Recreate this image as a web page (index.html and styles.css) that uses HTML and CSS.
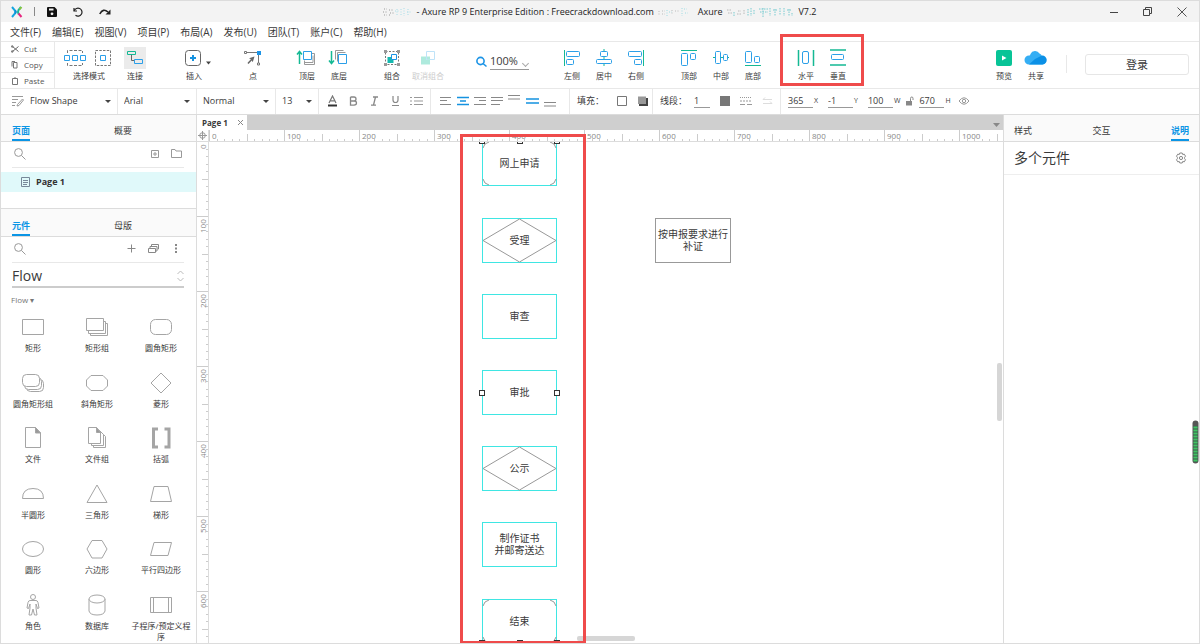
FILE: index.html
```html
<!DOCTYPE html>
<html lang="zh-CN">
<head>
<meta charset="utf-8">
<title>Axure RP 9</title>
<meta name="viewport" content="width=device-width, initial-scale=1">
<link rel="stylesheet" href="styles.css">
</head>
<body>
<div class="app">
  <header class="titlebar">
    <div class="quick">
      <svg class="logo" width="12" height="12" viewBox="0 0 12 12" fill="none" stroke-width="2"><path d="M1 1l3 3.500q1 1.500 0 3L1 11" stroke="#15a5e0"/><path d="M4 4.500q1.500 1.500 0 3" stroke="#0c8ed4"/><path d="M10 1L7.500 4q-1 2 0 4" stroke="#19b79c"/><path d="M10.500 1L8.500 3.500" stroke="#8bc540"/><path d="M7.500 7.500L10.500 11" stroke="#e6257e"/></svg>
      <span class="bar"></span>
      <button class="ico" aria-label="保存"><svg width="10" height="10" viewBox="0 0 10 10"><path d="M1 0h6.500L10 2.500V9q0 1-1 1H1Q0 10 0 9V1Q0 0 1 0z" fill="#111"/><path d="M2 1.500h4.500v2H2z" fill="#f3f3f3"/><circle cx="5" cy="6.800" r="1.400" fill="#f3f3f3"/></svg></button>
      <button class="ico" aria-label="撤销"><svg width="10" height="10" viewBox="0 0 10 10" fill="none" stroke="#222" stroke-width="1.200"><path d="M1 1v3h3"/><path d="M1.200 3.800A4 4 0 1 1 2.500 8.300"/></svg></button>
      <button class="ico" aria-label="重做"><svg width="12" height="10" viewBox="0 0 12 10"><path d="M.8 7Q4 .8 9 5" fill="none" stroke="#222" stroke-width="1.600"/><path d="M11.500 2.500V7.500H6.500z" fill="#222"/></svg></button>
    </div>
    <div class="title">
      <svg width="29" height="10" viewBox="0 0 29 10" fill="none" stroke-dasharray="1 1.500"><path d="M1 2h3M0 5h4M1 8h3M6 3h5M7 6h4M6 8h2" stroke="#999"/><path d="M12 4h4M14 2v7M18 2v7M21 1v8M24 5h4M25 2v6" stroke="#a8dde8"/></svg>
      <span>- Axure RP 9 Enterprise Edition : Freecrackdownload.com</span>
      <svg width="30" height="10" viewBox="0 0 30 10" fill="none" stroke-dasharray="1 1.500"><path d="M1 4v4M4 4h3M4 7h3M14 3v5M17 4h4" stroke="#bbb"/><path d="M9 3v6M11 5h3M24 1v8M26 2h3M27 6h3" stroke="#9edbe2"/></svg>
      <span class="product">Axure</span>
      <svg width="68" height="10" viewBox="0 0 68 10" fill="none" stroke-dasharray="1.500 1"><path d="M1 3h5M2 6h4M12 4h3M11 7h5M18 3v5" stroke="#b9b9b9"/><path d="M8 5v4M22 2v7M25 1v8M28 3v5M33 2h9M34 5h8M37 1v9M44 1v8M47 3h5M49 2v7M54 1v7M58 1v8M61 3h5M63 2v7M66 6v3" stroke="#79cbd0"/></svg>
      <span>V7.2</span>
    </div>
    <div class="winctl">
      <button class="ico" aria-label="最小化"><svg width="10" height="10" viewBox="0 0 10 10"><path d="M1 5.500h8" stroke="#444"/></svg></button>
      <button class="ico" aria-label="还原"><svg width="10" height="10" viewBox="0 0 10 10" fill="none" stroke="#444"><path d="M.5 2.500h6v6h-6zM2.500 2.500v-2h6v6h-2"/></svg></button>
      <button class="ico" aria-label="关闭"><svg width="10" height="10" viewBox="0 0 10 10"><path d="M.5.5l9 9M9.500.5l-9 9" stroke="#555"/></svg></button>
    </div>
  </header>

  <nav class="menu">
    <button>文件(F)</button><button>编辑(E)</button><button>视图(V)</button><button>项目(P)</button><button>布局(A)</button><button>发布(U)</button><button>团队(T)</button><button>账户(C)</button><button>帮助(H)</button>
  </nav>

  <section class="toolbar">
    <div class="clip">
      <button><svg width="8" height="8" viewBox="0 0 8 8" fill="none" stroke="#666"><path d="M1.500 1.500L7.500 6.500M1.500 6.500L7.500 1.500"/><circle cx="1.200" cy="1.500" r=".8"/><circle cx="1.200" cy="6.500" r=".8"/></svg>Cut</button>
      <button><svg width="8" height="8" viewBox="0 0 8 8" fill="none" stroke="#777"><path d="M2.500 1.500h3.500v5.500H2.500zM4 .5h-3v5"/></svg>Copy</button>
      <button><svg width="8" height="8" viewBox="0 0 8 8" fill="none" stroke="#777"><path d="M1.500 1.500h5v6h-5zM3 1h2"/></svg>Paste</button>
    </div>
    <div class="group">
      <button class="tool wide"><svg width="52" height="22" viewBox="0 0 52 22" fill="none"><path d="M4.500 6V3.500h15V6M4.500 16v2.500h15V16" stroke="#777" stroke-dasharray="3 1.500"/><path d="M1.500 8.500h5v5h-5zM9.500 8.500h5v5h-5zM17.500 8.500h5v5h-5z" stroke="#2b9fe8"/><path d="M32.500 3.500h15v15h-15z" stroke="#777" stroke-dasharray="2.500 1.250"/><path d="M37.500 8.500h5v5h-5z" stroke="#2b9fe8"/></svg>选择模式</button>
    </div>
    <div class="group g-connect">
      <button class="tool active"><svg width="22" height="22" viewBox="0 0 22 22" fill="none"><path d="M3.500 4.500h8v3h-8z" stroke="#15b994"/><path d="M7.500 8v5.500h3" stroke="#666"/><path d="M10.500 12.500h8v4h-8z" stroke="#2b9fe8"/></svg>连接</button>
    </div>
    <div class="group g-insert">
      <button class="tool insert"><svg width="36" height="22" viewBox="0 0 36 22" fill="none"><rect x="9.500" y="3.500" width="15" height="15" rx="3" stroke="#666"/><path d="M14 11h6M17 8v6" stroke="#1592e0" stroke-width="2"/><path d="M30 14.500h5l-2.500 3z" fill="#444"/></svg>插入</button>
    </div>
    <div class="group g-insert">
      <button class="tool"><svg width="22" height="22" viewBox="0 0 22 22" fill="none"><path d="M5 5.500h11.500V16" stroke="#777"/><path d="M2.500 4.500h2v2h-2zM15.500 16h2v2h-2z" fill="#fff" stroke="#777"/><path d="M15 4h4v4h-4z" fill="#1c94e6"/><path d="M6 16.500l4.500-5" stroke="#666" stroke-width="1.500"/><path d="M12.500 9.500L7 11.300l2.200.9.700 1.900.9.900z" fill="#666"/></svg>点</button>
    </div>
    <div class="group g-order">
      <button class="tool"><svg width="22" height="22" viewBox="0 0 22 22" fill="none"><path d="M3.500 17V5M1 7.500L3.500 4.500 6 7.500" stroke="#15b994" stroke-width="1.500"/><path d="M15.500 6.500h3v11h-10v-4M17 8.500v7h-8" stroke="#999"/><path d="M7.500 4.500h8v8h-8z" stroke="#2b9fe8" fill="#fff"/></svg>顶层</button>
      <button class="tool"><svg width="22" height="22" viewBox="0 0 22 22" fill="none"><path d="M3.500 4v12M1 13.500l2.500 3 2.500-3" stroke="#15b994" stroke-width="1.500"/><path d="M7.500 12.500v-9h8M9.500 14.500v-9h8" stroke="#999"/><path d="M10.500 7.500h8v9h-8z" stroke="#2b9fe8" fill="#fff"/></svg>底层</button>
    </div>
    <div class="group g-combine">
      <button class="tool"><svg width="22" height="22" viewBox="0 0 22 22" fill="none"><path d="M4.500 4.500h13v13h-13z" stroke="#777" stroke-dasharray="2 1.500"/><path d="M3 3h3v3H3zM16 3h3v3h-3zM3 16h3v3H3zM16 16h3v3h-3z" fill="#999"/><path d="M6.500 10h6v6h-6z" fill="#15b9b0"/><path d="M10.500 7.500h5v5h-5z" stroke="#1c94e6" fill="#fff"/></svg>组合</button>
      <button class="tool ungroup" disabled><svg width="22" height="22" viewBox="0 0 22 22" fill="none"><path d="M4 9.500h9v8H4z" fill="#aeeadd"/><path d="M9.500 4.500h8v8h-8z" stroke="#bfe3f8" fill="#fff"/><path d="M10 9.500h3v3h-3z" fill="#aeeadd"/></svg>取消组合</button>
    </div>
    <div class="zoom">
      <svg width="13" height="13" viewBox="0 0 13 13" fill="none" stroke="#1c94e6" stroke-width="1.600"><circle cx="5.500" cy="6" r="3.600"/><path d="M8 8.500l3.500 3"/></svg>
      <label class="pick"><select aria-label="缩放"><option>100%</option></select></label>
    </div>
    <div class="group g-align">
      <button class="tool"><svg width="22" height="22" viewBox="0 0 22 22" fill="none"><path d="M3.500 3v16" stroke="#15b994"/><rect x="5.500" y="4.500" width="13" height="5" rx="1" stroke="#2b9fe8"/><rect x="5.500" y="12.500" width="7" height="5" rx="1" stroke="#2b9fe8"/></svg>左侧</button>
      <button class="tool"><svg width="22" height="22" viewBox="0 0 22 22" fill="none"><path d="M11 2v17" stroke="#15b994"/><rect x="7.500" y="4.500" width="7" height="5" rx="1" stroke="#2b9fe8" fill="#fff"/><rect x="3.500" y="12.500" width="15" height="4" rx="1" stroke="#2b9fe8" fill="#fff"/></svg>居中</button>
      <button class="tool"><svg width="22" height="22" viewBox="0 0 22 22" fill="none"><path d="M18.500 3v16" stroke="#15b994"/><rect x="3.500" y="4.500" width="13" height="5" rx="1" stroke="#2b9fe8"/><rect x="9.500" y="12.500" width="7" height="5" rx="1" stroke="#2b9fe8"/></svg>右侧</button>
    </div>
    <div class="group g-valign">
      <button class="tool"><svg width="22" height="22" viewBox="0 0 22 22" fill="none"><path d="M3 3.500h16" stroke="#15b994"/><rect x="3.500" y="6.500" width="6" height="12" rx="1" stroke="#2b9fe8"/><rect x="12.500" y="6.500" width="5" height="6" rx="1" stroke="#2b9fe8"/></svg>顶部</button>
      <button class="tool"><svg width="22" height="22" viewBox="0 0 22 22" fill="none"><path d="M3 10.500h16" stroke="#15b994"/><rect x="5.500" y="4.500" width="5" height="12" rx="1" stroke="#2b9fe8" fill="#fff"/><rect x="13.500" y="7.500" width="4" height="6" rx="1" stroke="#2b9fe8" fill="#fff"/></svg>中部</button>
      <button class="tool"><svg width="22" height="22" viewBox="0 0 22 22" fill="none"><path d="M3 18.500h16" stroke="#15b994"/><rect x="3.500" y="4.500" width="6" height="11" rx="1" stroke="#2b9fe8"/><rect x="12.500" y="9.500" width="5" height="6" rx="1" stroke="#2b9fe8"/></svg>底部</button>
    </div>
    <div class="group g-spread">
      <button class="tool"><svg width="22" height="22" viewBox="0 0 22 22" fill="none"><path d="M3.500 3v16M18.500 3v16" stroke="#15b994" stroke-width="1.500"/><rect x="7.500" y="4.500" width="6" height="12" rx="1.500" stroke="#2b9fe8"/></svg>水平</button>
      <button class="tool"><svg width="22" height="22" viewBox="0 0 22 22" fill="none"><path d="M3 3h16M3 18h16" stroke="#15b994" stroke-width="1.500"/><rect x="4.500" y="7.500" width="12" height="5" rx="1" stroke="#2b9fe8"/></svg>垂直</button>
      <div class="mark mark-tools"></div>
    </div>
    <div class="account">
      <button class="tool"><svg width="22" height="22" viewBox="0 0 22 22"><rect x="3" y="3" width="16" height="16" rx="2" fill="#08c497"/><path d="M9 8.500v5l4.500-2.500z" fill="#fff"/></svg>预览</button>
      <button class="tool"><svg width="24" height="22" viewBox="0 0 24 22"><path d="M5 17.500a4.500 4.500 0 0 1 0-9Q6 9 6.500 7a5 5 0 0 1 9-.5 5 5 0 0 1 2.500 2.500 4.300 4.300 0 0 1 .5 8.500z" fill="#35aef4"/><path d="M5 17.500l6-5.500 7-3.500a4.500 4.500 0 0 1 .5 9z" fill="#0b90e6"/></svg>共享</button>
      <button class="login">登录</button>
    </div>
  </section>

  <section class="format">
    <div class="cell style">
      <svg width="12" height="12" viewBox="0 0 12 12" fill="none" stroke="#999"><path d="M0 1.500h11M0 4.500h6M0 7.500h4M0 10.500h3"/><path d="M5.500 9.500L10.500 4l1 1L7 10.500l-2 .5z"/></svg>
      <label class="pick"><select aria-label="样式"><option>Flow Shape</option></select></label>
    </div>
    <div class="cell font"><label class="pick"><select aria-label="字体"><option>Arial</option></select></label></div>
    <div class="cell weight"><label class="pick"><select aria-label="字重"><option>Normal</option></select></label></div>
    <div class="cell size"><label class="pick"><select aria-label="字号"><option>13</option></select></label></div>
    <div class="cell marks">
      <button class="ico" aria-label="文字颜色"><svg width="13" height="12" viewBox="0 0 13 12" fill="none"><path d="M3 8L6.500 1 10 8M4.300 5.800h4.400" stroke="#777" stroke-width="1.200"/><path d="M2 10.500h9" stroke="#333" stroke-width="2"/></svg></button>
      <button class="ico" aria-label="粗体"><svg width="13" height="12" viewBox="0 0 13 12" fill="none" stroke="#888" stroke-width="1.300"><path d="M3.500 2h3.500q2 0 2 2t-2 2H3.500M7 6q2.500 0 2.500 2T7 10.200H3.500V2"/></svg></button>
      <button class="ico" aria-label="斜体"><svg width="13" height="12" viewBox="0 0 13 12" fill="none" stroke="#888" stroke-width="1.300"><path d="M5 2h5M3 10.200h5M7.500 2l-2 8"/></svg></button>
      <button class="ico" aria-label="下划线"><svg width="13" height="12" viewBox="0 0 13 12" fill="none" stroke="#888" stroke-width="1.200"><path d="M4 1v4q0 2.500 2.500 2.500T9 5V1M3 10.500h7"/></svg></button>
      <button class="ico" aria-label="项目符号"><svg width="13" height="12" viewBox="0 0 13 12" stroke="#999" stroke-width="1.200"><path d="M0 2.500h2M4 2.500h9M0 6h2M4 6h9M0 9.500h2M4 9.500h9"/></svg></button>
    </div>
    <div class="cell aligns">
      <button class="ico" aria-label="左对齐"><svg width="12" height="12" viewBox="0 0 12 12" stroke="#888"><path d="M0 2.500h11M0 5.500h7M0 9.500h11"/></svg></button>
      <button class="ico" aria-label="居中对齐"><svg width="12" height="12" viewBox="0 0 12 12" stroke="#1592e0" stroke-width="1.500"><path d="M0 2.500h12M3 6h6M0 9.500h12"/></svg></button>
      <button class="ico" aria-label="右对齐"><svg width="12" height="12" viewBox="0 0 12 12" stroke="#888"><path d="M0 2.500h12M5 5.500h7M0 9.500h12"/></svg></button>
      <button class="ico" aria-label="两端对齐"><svg width="12" height="12" viewBox="0 0 12 12" stroke="#888"><path d="M0 2.500h12M0 5.500h12M0 9.500h9"/></svg></button>
      <button class="ico" aria-label="顶端对齐"><svg width="13" height="12" viewBox="0 0 13 12" stroke="#888"><path d="M0 .5h12M0 4h12"/></svg></button>
      <button class="ico" aria-label="垂直居中"><svg width="13" height="12" viewBox="0 0 13 12" stroke="#1592e0" stroke-width="1.500"><path d="M0 4h13M0 8h13"/></svg></button>
      <button class="ico" aria-label="底端对齐"><svg width="13" height="12" viewBox="0 0 13 12" stroke="#888"><path d="M0 7.500h12M0 11h12"/></svg></button>
    </div>
    <div class="cell fill"><span>填充：</span>
      <button class="ico" aria-label="填充颜色"><svg width="10" height="10" viewBox="0 0 10 10"><path d="M.5.5h9v9h-9z" fill="#fff" stroke="#777"/></svg></button>
      <button class="ico" aria-label="阴影"><svg width="11" height="10" viewBox="0 0 11 10"><path d="M2 2h9v8H2z" fill="#444"/><path d="M1 .5h8v7.500H1z" fill="#999"/></svg></button>
    </div>
    <div class="cell line"><label for="lw">线段：</label><input id="lw" class="num tiny" value="1">
      <button class="ico" aria-label="线条颜色"><svg width="10" height="10" viewBox="0 0 10 10"><path d="M0 0h10v10H0z" fill="#777"/></svg></button>
      <button class="ico" aria-label="线条样式"><svg width="12" height="10" viewBox="0 0 12 10" stroke="#999"><path d="M0 1.500h12" stroke-dasharray="1 1"/><path d="M0 5h12" stroke-dasharray="2 1"/><path d="M0 8.500h12" stroke-dasharray="5 2"/></svg></button>
      <button class="ico" aria-label="箭头样式"><svg width="11" height="10" viewBox="0 0 11 10" fill="none" stroke="#ddd"><path d="M1 3.500h9M3 1.500l-2 2M1 7.500h9M8 5.500l2 2"/></svg></button>
    </div>
    <div class="cell coords">
      <label><input class="num" value="365">X</label>
      <label><input class="num" value="-1">Y</label>
      <label><input class="num" value="100">W</label>
      <button class="ico lock" aria-label="锁定比例"><svg width="9" height="10" viewBox="0 0 9 10"><path d="M1 5h6v4.500H1z" fill="#888"/><path d="M5.500 5V2.500q0-1.500 1.300-1.500T8 2.500V4" fill="none" stroke="#888"/></svg></button>
      <label><input class="num" value="670">H</label>
      <button class="ico eye" aria-label="可见性"><svg width="12" height="10" viewBox="0 0 12 10" fill="none" stroke="#999"><path d="M1 5q5-6.500 10 0-5 6.500-10 0z"/><circle cx="6" cy="5" r="1.700"/></svg></button>
    </div>
  </section>

  <main class="main">
    <aside class="left">
      <div class="tabs"><button class="tab on">页面</button><button class="tab">概要</button></div>
      <div class="tools">
        <svg width="12" height="12" viewBox="0 0 12 12" fill="none" stroke="#999"><circle cx="4.500" cy="4.500" r="3.900"/><path d="M7.500 7.500l4 4"/></svg>
        <button class="ico push" aria-label="添加页面"><svg width="8" height="8" viewBox="0 0 8 8" fill="none" stroke="#999"><path d="M.5.5h7v7h-7z"/><path d="M4 2v4M2 4h4"/></svg></button>
        <button class="ico" aria-label="添加文件夹"><svg width="11" height="9" viewBox="0 0 11 9" fill="none" stroke="#999"><path d="M.5 8.500v-8H4l1 1.500h5.500v6.500z"/></svg></button>
      </div>
      <a class="page" href="#page1"><svg width="9" height="10" viewBox="0 0 9 10" fill="none" stroke="#789"><path d="M.5.5h8v9h-8zM2 3.500h5M2 5.500h5M2 7.500h4"/></svg>Page 1</a>
      <div class="tabs second"><button class="tab on">元件</button><button class="tab">母版</button></div>
      <div class="tools">
        <svg width="12" height="12" viewBox="0 0 12 12" fill="none" stroke="#999"><circle cx="4.500" cy="4.500" r="3.900"/><path d="M7.500 7.500l4 4"/></svg>
        <button class="ico push" aria-label="添加"><svg width="9" height="9" viewBox="0 0 9 9" stroke="#888"><path d="M4.500.5v8M.5 4.500h8"/></svg></button>
        <button class="ico" aria-label="元件库"><svg width="11" height="9" viewBox="0 0 11 9" fill="none" stroke="#888"><path d="M.5 4.500h7v4h-7zM2 4V2.500h7V7H8M3.500 2V.5h7V5H9.500"/></svg></button>
        <button class="ico menu-dots" aria-label="更多"><svg width="3" height="9" viewBox="0 0 3 9" fill="#888"><path d="M0 0h2v2H0zM0 3.500h2v2H0zM0 7h2v2H0z"/></svg></button>
      </div>
      <label class="library"><select aria-label="元件库选择"><option>Flow</option></select><svg width="7" height="12" viewBox="0 0 7 12" fill="none" stroke="#bbb"><path d="M.5 4l3-3 3 3M.5 8l3 3 3-3"/></svg></label>
      <div class="section">Flow ▾</div>
      <div class="shapes">
        <button><svg width="24" height="24" viewBox="0 0 24 24"><path d="M1.500 4.500h21v15h-21z"/></svg>矩形</button>
        <button><svg width="24" height="24" viewBox="0 0 24 24"><path d="M5.500 8.500h17v12h-17z"/><path d="M3.500 6.500h17v12h-17z"/><path d="M1.500 3.500h17v12h-17z"/></svg>矩形组</button>
        <button><svg width="24" height="24" viewBox="0 0 24 24"><rect x="1.500" y="4.500" width="21" height="15" rx="5"/></svg>圆角矩形</button>
        <button><svg width="24" height="24" viewBox="0 0 24 24"><rect x="5.500" y="8.500" width="17" height="12" rx="4"/><rect x="3.500" y="6.500" width="17" height="12" rx="4"/><rect x="1.500" y="3.500" width="17" height="12" rx="4"/></svg>圆角矩形组</button>
        <button><svg width="24" height="24" viewBox="0 0 24 24"><path d="M6 4.500h12l4.500 4.500v6L18 19.500H6L1.500 15V9z"/></svg>斜角矩形</button>
        <button><svg width="24" height="24" viewBox="0 0 24 24"><path d="M12 2l10 10-10 10L2 12z"/></svg>菱形</button>
        <button><svg width="24" height="24" viewBox="0 0 24 24"><path d="M4.500 1.500h10l5 5.500v14.500h-15z"/><path d="M14.500 1.500V7h5z" fill="#999"/></svg>文件</button>
        <button><svg width="24" height="24" viewBox="0 0 24 24"><path d="M8.500 6.500h8l4 4v11h-12z"/><path d="M6.500 4.500h8l4 4v11h-12z"/><path d="M3.500 1.500h8l4 5v11h-12z"/><path d="M11.500 1.500v5h4z" fill="#999"/></svg>文件组</button>
        <button><svg width="24" height="24" viewBox="0 0 24 24"><path class="thick" d="M9 3H4.500v18H9M15.500 3H20v18h-4.500"/></svg>括弧</button>
        <button><svg width="24" height="24" viewBox="0 0 24 24"><path d="M1.500 16.500q0-10 10.500-10t10.500 10z"/></svg>半圆形</button>
        <button><svg width="24" height="24" viewBox="0 0 24 24"><path d="M12 3l10 17.500H2z"/></svg>三角形</button>
        <button><svg width="24" height="24" viewBox="0 0 24 24"><path d="M5 4.500h14l3.500 15h-21z"/></svg>梯形</button>
        <button><svg width="24" height="24" viewBox="0 0 24 24"><ellipse cx="12" cy="12" rx="10.500" ry="7.500"/></svg>圆形</button>
        <button><svg width="24" height="24" viewBox="0 0 24 24"><path d="M7 3.500h10l5 8.500-5 9H7l-5-9z"/></svg>六边形</button>
        <button><svg width="24" height="24" viewBox="0 0 24 24"><path d="M5 5.500h17.500l-3.500 13H1.500z"/></svg>平行四边形</button>
        <button><svg width="24" height="24" viewBox="0 0 24 24"><circle cx="12" cy="4" r="2.500"/><path d="M9 7.500h6q1.500 0 2 2l1 5.500-1.500.5L15 11v4l1 7h-2.500L12 16l-1.500 6H8l1-7v-4l-1.500 4.500L6 15l1-5.500q.5-2 2-2z"/></svg>角色</button>
        <button><svg width="24" height="24" viewBox="0 0 24 24"><path d="M4 6v12q1 4 8 4t8-4V6"/><ellipse cx="12" cy="6" rx="8" ry="4"/></svg>数据库</button>
        <button><svg width="24" height="24" viewBox="0 0 24 24"><path d="M1.500 4.500h21v15h-21zM4.500 4.500v15M19.500 4.500v15"/></svg>子程序/预定义程序</button>
      </div>
    </aside>

    <section class="work">
      <div class="docs"><div class="doc"><span>Page 1</span><button class="ico" aria-label="关闭页面"><svg width="5" height="5" viewBox="0 0 5 5" stroke="#888"><path d="M0 0l5 5M5 0L0 5"/></svg></button></div><button class="ico docs-more" aria-label="页面列表"><svg width="7" height="4" viewBox="0 0 7 4"><path d="M0 0h7L3.500 4z" fill="#888"/></svg></button></div>
      <div class="board">
        <div class="corner"><svg width="9" height="9" viewBox="0 0 9 9" fill="none" stroke="#999"><circle cx="4.500" cy="4.500" r="2.800"/><path d="M4.500 0v9M0 4.500h9"/></svg></div>
        <svg class="ruler-x" aria-hidden="true">
          <defs><pattern id="tx" width="75" height="12" patternUnits="userSpaceOnUse"><path d="M.5 0v12M38.500 4v8M8.500 9v3M15.500 9v3M23.500 9v3M30.500 9v3M45.500 9v3M53.500 9v3M60.500 9v3M68.500 9v3" stroke="#ccc"/></pattern></defs>
          <rect width="100%" height="12" fill="url(#tx)"/>
          <g><text x="3" y="9">0</text><text x="78" y="9">100</text><text x="153" y="9">200</text><text x="228" y="9">300</text><text x="303" y="9">400</text><text x="378" y="9">500</text><text x="453" y="9">600</text><text x="528" y="9">700</text><text x="603" y="9">800</text><text x="678" y="9">900</text><text x="753" y="9">1000</text></g>
        </svg>
        <svg class="ruler-y" aria-hidden="true">
          <defs><pattern id="ty" y="-1" width="12" height="75" patternUnits="userSpaceOnUse"><path d="M0 .5h12M5 38.500h7M9 8.500h3M9 15.500h3M9 23.500h3M9 30.500h3M9 45.500h3M9 53.500h3M9 60.500h3M9 68.500h3" stroke="#ccc"/></pattern></defs>
          <rect width="12" height="100%" fill="url(#ty)"/>
          <g><text transform="translate(9 7) rotate(-90)">0</text><text transform="translate(9 91) rotate(-90)">100</text><text transform="translate(9 166) rotate(-90)">200</text><text transform="translate(9 241) rotate(-90)">300</text><text transform="translate(9 316) rotate(-90)">400</text><text transform="translate(9 391) rotate(-90)">500</text><text transform="translate(9 466) rotate(-90)">600</text></g>
        </svg>
        <div class="canvas">
          <div class="node sel n1"><svg width="75" height="45" viewBox="0 0 75 45"><path d="M1 38q1 5 6 6M74 38q-1 5-6 6M1 7q1-5 6-6M74 7q-1-5-6-6"/></svg><span>网上申请</span></div>
          <div class="node sel n2"><svg width="75" height="45" viewBox="0 0 75 45"><path d="M37.500 1L74 22.500 37.500 44 1 22.500z"/></svg><span>受理</span></div>
          <div class="node sel n3"><span>审查</span></div>
          <div class="node sel n4"><span>审批</span></div>
          <div class="node sel n5"><svg width="75" height="45" viewBox="0 0 75 45"><path d="M37.500 1L74 22.500 37.500 44 1 22.500z"/></svg><span>公示</span></div>
          <div class="node sel n6"><span>制作证书<br>并邮寄送达</span></div>
          <div class="node sel n7"><svg width="75" height="45" viewBox="0 0 75 45"><path d="M1 38q1 5 6 6M74 38q-1 5-6 6M1 7q1-5 6-6M74 7q-1-5-6-6"/></svg><span>结束</span></div>
          <div class="node n8"><span>按申报要求进行<br>补证</span></div>
          <i class="grip h1"></i><i class="grip h2"></i><i class="grip h3"></i><i class="grip h4"></i><i class="grip h5"></i><i class="grip h6"></i><i class="grip h7"></i><i class="grip h8"></i>
          <div class="thumb-y"></div><div class="thumb-x"></div>
        </div>
      </div>
      <div class="mark mark-flow"></div>
    </section>

    <aside class="right">
      <div class="tabs"><button class="tab">样式</button><button class="tab">交互</button><button class="tab on">说明</button></div>
      <div class="heading"><h2>多个元件</h2><button class="ico" aria-label="设置"><svg width="12" height="12" viewBox="0 0 12 12" fill="none" stroke="#888"><path d="M4.800 1h2.400l.5 1.500 1.600-.3L10.500 4.200 9.600 5.300v1.400l.9 1.100-1.200 2-1.600-.3L7.200 11H4.800l-.5-1.500-1.600.3-1.200-2 .9-1.100V5.300l-.9-1.100 1.200-2 1.600.3z"/><circle cx="6" cy="6" r="1.600"/></svg></button></div>
      <svg class="meter" width="7" height="44" viewBox="0 0 7 44"><rect x=".5" y=".5" width="6" height="43" rx="3" fill="#555"/><path d="M3.500 6v36" stroke="#3d8f57" stroke-width="4"/><path d="M3.500 7v35" stroke="#40c463" stroke-width="4" stroke-dasharray="1 2"/></svg>
    </aside>
  </main>
</div>
</body>
</html>
```
FILE: styles.css
```css
* { box-sizing: border-box; }
body { margin: 0; font: 9px/12px "Open Sans", "Noto Sans CJK SC", sans-serif; color: #3a3a3a; background: #fff; }
button, input, select { font: inherit; color: inherit; margin: 0; padding: 0; border: 0; background: none; border-radius: 0; }
svg { display: block; flex: none; }
select { appearance: none; outline: 0; }
h2 { margin: 0; font-weight: 400; font-size: 14px; line-height: 20px; }

.app { display: flex; flex-direction: column; height: 100vh; border: 1px solid #dcdcdc; overflow: hidden; }
.ico { display: flex; align-items: center; justify-content: center; flex: none; }

/* title bar */
.titlebar { display: grid; grid-template-columns: 1fr auto 1fr; align-items: center; height: 21px; flex: none; background: #f3f3f3; }
.quick { display: flex; align-items: center; gap: 16px; padding-left: 10px; }
.bar { width: 1px; height: 9px; background: #888; margin: 0 -4px 0 -5px; }
.title { display: flex; align-items: center; gap: 4px; color: #222; white-space: nowrap; }
.product { margin-left: 6px; }
.winctl { display: flex; justify-content: flex-end; gap: 24px; padding-right: 12px; }

.menu { display: flex; align-items: center; gap: 11px; height: 19px; padding-left: 9px; flex: none; font-size: 10px; }

/* main toolbar */
.toolbar { display: flex; height: 48px; flex: none; border-top: 1px solid #e8e8e8; border-bottom: 1px solid #e8e8e8; font-size: 8px; }
.clip { display: flex; flex-direction: column; width: 54px; margin-right: 8px; border-right: 1px solid #e8e8e8; }
.clip button { display: flex; align-items: center; gap: 5px; flex: 1; padding-left: 10px; color: #555; }
.clip button + button { border-top: 1px solid #e8e8e8; }
.group { position: relative; display: flex; padding-top: 5px; }
.tool { display: flex; flex-direction: column; align-items: center; gap: 1px; width: 32px; white-space: nowrap; }
.tool.wide { width: 52px; }
.tool.insert { width: 36px; }
.tool.ungroup { width: 40px; color: #ccc; }
.tool.active svg { background: #ebebeb; }
.g-connect { margin-left: 4px; }
.g-insert { margin-left: 25px; }
.g-order { margin-left: 22px; }
.g-combine { margin-left: 21px; }
.zoom { display: flex; align-items: flex-start; gap: 2px; margin-left: 27px; padding-top: 11px; }
.zoom svg { margin-top: 2px; }
.zoom .pick { width: 39px; border-bottom: 1px solid #999; font-size: 11px; line-height: 16px; }
.zoom .pick::after { border: solid #aaa; border-width: 0 1px 1px 0; width: 4px; height: 4px; transform: rotate(45deg); right: 1px; top: 8px; }
.g-align { margin-left: 27px; }
.g-valign { margin-left: 21px; }
.g-spread { margin-left: 21px; }
.account { display: flex; align-items: flex-start; margin-left: auto; padding: 5px 10px 0 0; }
.login { width: 104px; height: 21px; margin: 7px 0 0 33px; border: 1px solid #e6e6e6; border-radius: 3px; font-size: 11px; position: relative; }
.login::before { content: ""; position: absolute; left: -20px; top: 0; width: 1px; height: 18px; background: #e8e8e8; }

.pick { position: relative; display: flex; flex: 1; }
.pick select { width: 100%; }
.pick::after { content: ""; position: absolute; right: 0; top: 5px; border: 3px solid transparent; border-top-color: #444; border-bottom: 0; pointer-events: none; }

/* format bar */
.format { display: flex; height: 26px; flex: none; border-bottom: 1px solid #dcdcdc; }
.cell { display: flex; align-items: center; flex: none; padding-bottom: 2px; border-right: 1px solid #e8e8e8; }
.cell:last-child { border-right: 0; }
.style { width: 117px; padding: 0 6px 2px 11px; gap: 6px; }
.font, .weight { width: 79px; padding: 0 6px 2px; }
.size { width: 43px; padding: 0 6px 2px; }
.marks { width: 112px; padding-left: 7px; gap: 8px; }
.aligns { width: 139px; padding-left: 9px; gap: 5px; }
.fill { width: 83px; padding-left: 7px; gap: 10px; }
.fill span, .line label { width: 30px; white-space: nowrap; }
.line { width: 128px; padding-left: 7px; gap: 10px; }
.line label { margin-right: -6px; }
.num { width: 25px; height: 14px; border-bottom: 1px solid #999; margin-right: 1px; }
.num.tiny { width: 16px; margin-right: 0; }
.coords { padding-left: 7px; gap: 10px; }
.coords label { display: flex; align-items: center; font-size: 7px; }
.coords label .num { font-size: 9px; }
.lock { margin: 0 -5px; }
.eye { margin-left: -3px; }

.main { display: flex; flex: 1; min-height: 0; }

/* side panels */
.left { width: 196px; flex: none; display: flex; flex-direction: column; border-right: 1px solid #dcdcdc; overflow: hidden; }
.tabs { display: flex; height: 27px; flex: none; padding: 0 11px; background: #fafafa; border-bottom: 1px solid #dcdcdc; }
.left .tabs { gap: 84px; }
.left .second { height: 29px; margin-top: 16px; border-top: 1px solid #dcdcdc; }
.tab { padding: 8px 0 0; border-bottom: 2px solid transparent; }
.tab.on { color: #0b95e5; font-weight: 700; border-color: #0b95e5; }
.tools { display: flex; align-items: center; gap: 12px; height: 26px; flex: none; margin: 0 12px 0 11px; padding: 0 2px 2px; border-bottom: 1px solid #e8e8e8; }
.push { margin-left: auto; }
.menu-dots { margin: 0 4px; }
.page { display: flex; align-items: center; gap: 6px; height: 20px; flex: none; margin-top: 4px; padding-left: 20px; background: #e0f9fa; color: #333; font-weight: 700; text-decoration: none; }
.library { display: flex; align-items: center; margin: 3px 12px 0 11px; height: 22px; flex: none; border-bottom: 2px solid #ccc; font-size: 14px; line-height: 20px; }
.library select { flex: 1; }
.section { margin: 6px 0 0 10px; font-size: 8px; color: #777; }
.shapes { display: grid; grid-template-columns: repeat(3, 1fr); grid-template-rows: 56px 55px 56px 55px 56px 56px; margin-top: 9px; margin-right: 3px; }
.shapes button { display: flex; flex-direction: column; align-items: center; gap: 3px; padding: 0 2px; font-size: 8px; line-height: 11px; }
.shapes svg { fill: #fff; stroke: #a5a5a5; stroke-width: 1; }
.shapes .thick { stroke-width: 3; }

.right { position: relative; width: 196px; flex: none; border-left: 1px solid #dcdcdc; }
.right .tabs { justify-content: space-between; padding: 0 10px; }
.heading { display: flex; align-items: center; justify-content: space-between; height: 33px; padding: 0 12px 0 10px; border-bottom: 1px solid #eee; }
.meter { position: absolute; right: 0; top: 305px; }

/* workspace */
.work { position: relative; display: flex; flex-direction: column; flex: 1; min-width: 0; }
.docs { display: flex; align-items: center; height: 15px; flex: none; background: #cfcfcf; }
.doc { display: flex; align-items: center; gap: 10px; width: 50px; height: 15px; padding-left: 5px; background: #fff; font-size: 8px; font-weight: 700; white-space: nowrap; }
.docs-more { margin: 4px 3px 0 auto; }
.board { display: grid; grid-template-columns: 12px 1fr; grid-template-rows: 12px 1fr; flex: 1; min-height: 0; }
.corner { display: flex; align-items: center; justify-content: center; border-right: 1px solid #dcdcdc; border-bottom: 1px solid #dcdcdc; }
.ruler-x { width: 100%; height: 12px; border-bottom: 1px solid #dcdcdc; }
.ruler-y { width: 12px; height: 100%; border-right: 1px solid #dcdcdc; }
.board text { font-size: 8px; fill: #888; }
.canvas { position: relative; overflow: hidden; }

.node { position: absolute; display: grid; place-items: center; width: 75px; height: 45px; padding-bottom: 2px; border: 1px solid #999; font-size: 10px; line-height: 12px; text-align: center; white-space: nowrap; }
.node.sel { left: 273px; border-color: #3fe6e3; }
.node svg { position: absolute; left: -1px; top: -1px; fill: none; stroke: #999; }
.n1 { top: -1px; }
.n2 { top: 76px; }
.n3 { top: 152px; }
.n4 { top: 228px; }
.n5 { top: 304px; }
.n6 { top: 380px; }
.n7 { top: 457px; }
.node.n8 { top: 76px; left: 446px; width: 76px; }
.grip { position: absolute; width: 6px; height: 6px; border: 1px solid #333; background: #fff; }
.h1, .h4, .h6 { left: 270px; }
.h2, .h7 { left: 308px; }
.h3, .h5, .h8 { left: 345px; }
.h1, .h2, .h3 { top: -4px; }
.h4, .h5 { top: 248px; }
.h6, .h7, .h8 { top: 498px; }
.thumb-y, .thumb-x { position: absolute; border-radius: 2px; background: #d6d6d6; }
.thumb-y { right: 1px; top: 221px; width: 5px; height: 58px; }
.thumb-x { left: 368px; bottom: 2px; width: 58px; height: 5px; }

/* red call-out frames */
.mark { position: absolute; border: 3px solid #ef4b4b; pointer-events: none; }
.mark-tools { left: -10px; top: -8px; width: 84px; height: 52px; }
.mark-flow { left: 263px; top: 19px; bottom: -1px; width: 126px; }
```
